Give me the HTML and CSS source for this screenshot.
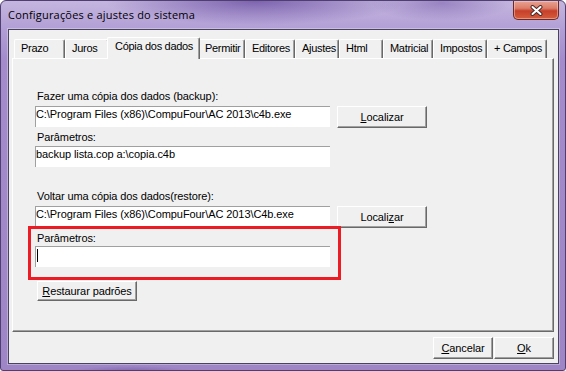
FILE: index.html
```html
<!DOCTYPE html>
<html lang="pt">
<head>
  <meta charset="UTF-8">
  <title>Configurações e ajustes do sistema</title>
  <link rel="stylesheet" href="styles.css">
</head>
<body>
  <div class="window">
    <div class="titlebar">
      <span class="title">Configurações e ajustes do sistema</span>
      <button class="close" aria-label="Fechar">
        <svg width="13" height="11" viewBox="0 0 13 11">
          <path d="M2.5 2 L10.5 9 M10.5 2 L2.5 9" stroke="#4b2a2a" stroke-width="4" stroke-linecap="round" fill="none"/>
          <path d="M2.5 2 L10.5 9 M10.5 2 L2.5 9" stroke="#fff" stroke-width="2" stroke-linecap="round" fill="none"/>
        </svg>
      </button>
    </div>

    <div class="client">
      <div class="tabs">
        <div class="tab">Prazo</div>
        <div class="tab">Juros</div>
        <div class="tab active">Cópia dos dados</div>
        <div class="tab">Permitir</div>
        <div class="tab">Editores</div>
        <div class="tab">Ajustes</div>
        <div class="tab">Html</div>
        <div class="tab">Matricial</div>
        <div class="tab">Impostos</div>
        <div class="tab">+ Campos</div>
      </div>

      <div class="panel">
        <!-- backup -->
        <div class="label first">Fazer uma cópia dos dados (backup):</div>
        <div class="row">
          <div class="edit">C:\Program Files (x86)\CompuFour\AC 2013\c4b.exe</div>
          <button class="btn locate"><u>L</u>ocalizar</button>
        </div>
        <div class="label gap-s">Parâmetros:</div>
        <div class="edit tight">backup lista.cop a:\copia.c4b</div>

        <!-- restore -->
        <div class="label gap-l">Voltar uma cópia dos dados(restore):</div>
        <div class="row">
          <div class="edit">C:\Program Files (x86)\CompuFour\AC 2013\C4b.exe</div>
          <button class="btn locate">Locali<u>z</u>ar</button>
        </div>
        <div class="label gap-m">Parâmetros:</div>
        <div class="edit tight focus"><span class="caret"></span></div>

        <button class="btn restore"><u>R</u>estaurar padrões</button>

        <div class="highlight"></div>
      </div>

      <div class="footer">
        <button class="btn action"><u>C</u>ancelar</button>
        <button class="btn action"><u>O</u>k</button>
      </div>
    </div>
  </div>
</body>
</html>
```

FILE: styles.css
```css
html, body {
  margin: 0;
  padding: 0;
  background: #fff;
}

body {
  font-family: 'Liberation Sans', Arial, sans-serif;
  font-size: 11px;
  color: #000;
}

.window {
  width: 566px;
  height: 371px;
  box-sizing: border-box;
  border: 1px solid #4f3f70;
  border-radius: 6px 6px 3px 3px;
  background:
    radial-gradient(ellipse 150px 24px at 255px 0, rgba(112, 84, 166, 0.85), transparent),
    radial-gradient(ellipse 70px 18px at 440px 2px, rgba(125, 100, 175, 0.6), transparent),
    radial-gradient(ellipse 60px 5px at 130px 370px, rgba(110, 85, 160, 0.6), transparent),
    linear-gradient(180deg, #c4b6df 0, #b3a0d6 26px, #a38bcc 60px, #9d85c6 100%);
  display: flex;
  flex-direction: column;
  overflow: hidden;
}

.titlebar {
  height: 28px;
  flex-shrink: 0;
  display: flex;
  justify-content: space-between;
  align-items: flex-start;
  padding-left: 7px;
}

.title {
  font-family: 'Open Sans', 'Noto Sans', sans-serif;
  font-size: 11px;
  letter-spacing: 0.2px;
  line-height: 15px;
  padding-top: 6px;
  color: #000;
}

.close {
  width: 46px;
  height: 19px;
  margin-right: 6px;
  padding: 0;
  border: 1px solid #6e2a22;
  border-top: none;
  border-radius: 0 0 5px 5px;
  background: linear-gradient(180deg, #e9a293 0, #dc7d69 40%, #c73f2a 55%, #d45e3e 100%);
  box-shadow: inset 0 0 0 1px rgba(255, 220, 210, 0.45);
  display: flex;
  align-items: center;
  justify-content: center;
}

.close svg {
  display: block;
}

.client {
  flex: 1;
  margin: 0 6px 6px 7px;
  border: 1px solid #4a4360;
  box-shadow: 0 0 0 1px rgba(255, 255, 255, 0.3);
  background: #f0f0f0;
  padding: 7px 4px 0 3px;
  display: flex;
  flex-direction: column;
}

.tabs {
  display: grid;
  grid-template-columns: 51px 44px 89px 47px 50px 44px 44px 50px 54px 60px;
  height: 21px;
  align-items: end;
  padding-left: 2px;
  position: relative;
  z-index: 1;
}

.tab {
  height: 19px;
  box-sizing: border-box;
  border-top: 1px solid #fff;
  border-left: 1px solid #fff;
  border-right: 1px solid #696969;
  box-shadow: inset -1px 0 0 #a0a0a0;
  border-radius: 2px 2px 0 0;
  background: #f0f0f0;
  padding: 2px 0 0 6px;
  line-height: 13px;
  letter-spacing: -0.3px;
  white-space: nowrap;
  overflow: hidden;
}

.tab.active {
  height: 22px;
  margin: 0 -2px -1px;
  padding-left: 7px;
  position: relative;
  z-index: 2;
}

.panel {
  height: 274px;
  box-sizing: border-box;
  border: 1px solid;
  border-color: #fff #696969 #696969 #fff;
  box-shadow: inset -1px -1px 0 #a0a0a0;
  padding: 31px 0 0 22px;
  position: relative;
}

.label {
  line-height: 13px;
  height: 13px;
  margin-left: 2px;
  letter-spacing: -0.1px;
  white-space: nowrap;
}

.label.gap-s { margin-top: 3px; }
.label.gap-m { margin-top: 4px; }
.label.gap-l { margin-top: 23px; }

.row {
  display: flex;
  align-items: flex-start;
  gap: 7px;
  margin-top: 3px;
}

.edit {
  width: 295px;
  height: 21px;
  box-sizing: border-box;
  background: #fff;
  border-top: 1px solid #a0a0a0;
  border-left: 1px solid #a0a0a0;
  padding: 1px 0 0 0;
  line-height: 13px;
  letter-spacing: -0.08px;
  white-space: nowrap;
  overflow: hidden;
}

.edit.tight {
  margin-top: 2px;
}

.edit.focus {
  margin-top: 1px;
  padding-left: 1px;
}

.caret {
  display: inline-block;
  width: 1px;
  height: 13px;
  background: #000;
  vertical-align: top;
  margin-top: 1px;
}

.btn {
  box-sizing: border-box;
  background: #f0f0f0;
  border: 1px solid;
  border-color: #fff #696969 #696969 #fff;
  box-shadow: inset -1px -1px 0 #a0a0a0;
  font-family: inherit;
  font-size: 11px;
  letter-spacing: -0.1px;
  color: #000;
  padding: 0;
  line-height: 13px;
}

.btn u {
  text-underline-offset: 1px;
}

.locate {
  width: 90px;
  height: 22px;
}

.restore {
  display: block;
  width: 100px;
  height: 20px;
  margin: 14px 0 0 2px;
}

.highlight {
  position: absolute;
  left: 15px;
  top: 167px;
  width: 313px;
  height: 54px;
  box-sizing: border-box;
  border: 3px solid #ed1c24;
}

.footer {
  display: flex;
  justify-content: flex-end;
  gap: 1px;
  padding-top: 5px;
}

.action {
  width: 60px;
  height: 22px;
}
```
